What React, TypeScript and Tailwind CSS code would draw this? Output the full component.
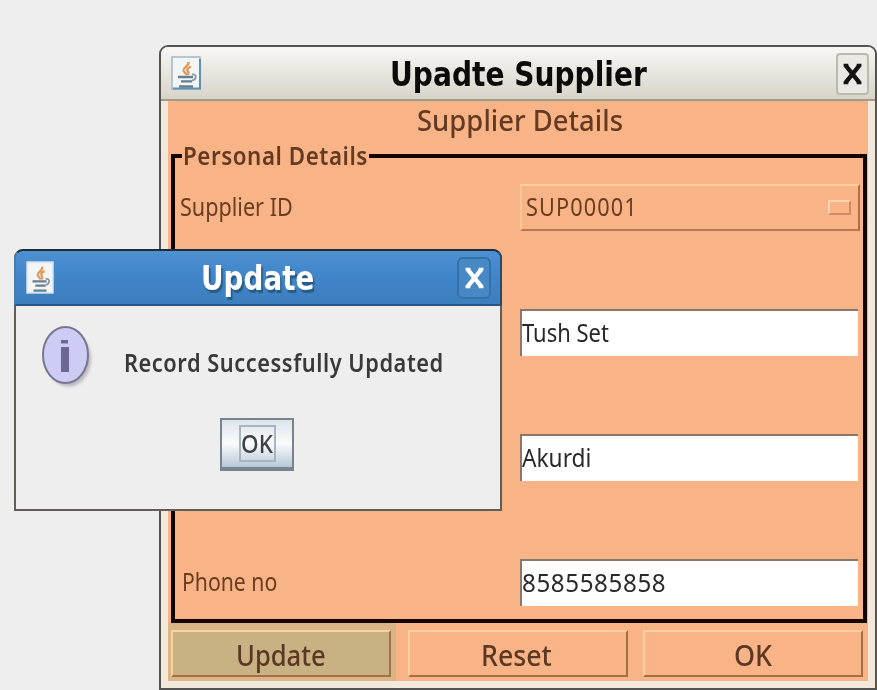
import { useLayoutEffect, useRef, useState } from 'react';

// One line of text, condensed or widened so that it fills its box.
function Fit({ text, className }: { text: string; className: string }) {
  const box = useRef<HTMLDivElement>(null);
  const inner = useRef<HTMLSpanElement>(null);
  const [scale, setScale] = useState(1);
  useLayoutEffect(() => {
    if (box.current && inner.current) {
      setScale(box.current.offsetWidth / inner.current.offsetWidth);
    }
  }, [text]);
  return (
    <div ref={box} className={`shrink-0 leading-none ${className}`}>
      <span
        ref={inner}
        className="inline-block origin-left whitespace-nowrap"
        style={{ transform: `scaleX(${scale})` }}
      >
        {text}
      </span>
    </div>
  );
}

function JavaIcon({ className, framed }: { className: string; framed: boolean }) {
  return (
    <svg viewBox="0 0 30 34" preserveAspectRatio="none" className={className}>
      <rect x="1" y="1" width="28" height="32" fill="#f3f5f5" stroke={framed ? '#a3b7c4' : '#cfdde8'} strokeWidth="1.5" />
      {framed && <path d="M2 32.500H29V3" fill="none" stroke="#5f8fb3" strokeWidth="2" />}
      <path d="M17.500 6c1 4-5.500 5-5 8.500.5 2 2.500 2.500 3 4.500M20 10.500c-4 1.500-4.500 3.500-3 5 1 1 0 2.500-.5 3.500" fill="none" stroke="#dd9a5c" strokeWidth="2.400" />
      <path d="M7 21h15M10 25.300h11M8 30.500h14" fill="none" stroke="#647f8f" strokeWidth="2.300" />
      <path d="M21 18.500c5-1 5 5 0 6" fill="none" stroke="#8498a6" strokeWidth="1.800" />
    </svg>
  );
}

function CloseMark({ className }: { className: string }) {
  return (
    <svg viewBox="0 0 20 24" preserveAspectRatio="none" className={className}>
      <path d="M3.500 3.500L16.500 20.500M16.500 3.500L3.500 20.500" fill="none" stroke="currentColor" strokeWidth="4.200" />
      <path d="M1.500 3.200h4.500M14 3.200h4.500M1.500 20.800h4.500M14 20.800h4.500" fill="none" stroke="currentColor" strokeWidth="3" />
    </svg>
  );
}

function Field({ value, className }: { value: string; className: string }) {
  return (
    <div className="flex h-[47px] w-[338px] items-start border-t-2 border-l-2 border-[#8b7767] bg-white pt-[9px]">
      <Fit text={value} className={`text-[25px] text-[#292929] ${className}`} />
    </div>
  );
}

function MotifButton({ text, box, label }: { text: string; box: string; label: string }) {
  return (
    <div className={`flex h-[47px] justify-center border-2 border-t-[#fbd29f] border-l-[#fbd29f] border-r-[#a56f45] border-b-[#a56f45] pt-[8px] ${box}`}>
      <Fit text={text} className={`text-[29px] font-medium text-[#5c3822] ${label}`} />
    </div>
  );
}

function SupplierWindow() {
  return (
    <div className="absolute top-[45px] left-[159px] flex h-[645px] w-[718px] flex-col rounded-t-[9px] border-2 border-[#55534f] bg-[#f2e8dc]">
      <div className="flex h-[54px] shrink-0 items-start justify-between rounded-t-[7px] border-b-2 border-[#a49c8b] bg-linear-to-b from-[#f7f7f5] via-[#e7e5df] to-[#d8d4ca] pt-[6px] pr-[6px] pl-[10px]">
        <JavaIcon framed className="mt-[3px] h-[34px] w-[30px]" />
        <Fit text="Upadte Supplier" className="mt-[4px] w-[257px] font-['DejaVu_Sans'] text-[34px] font-bold text-[#0c0b09]" />
        <div className="flex h-[42px] w-[33px] items-center justify-center rounded-sm border-2 border-[#bdb9af] bg-[#ebe9e4]">
          <CloseMark className="h-[24px] w-[21px] text-[#15130f]" />
        </div>
      </div>
      <div className="ml-[7px] flex h-[580px] w-[700px] shrink-0 flex-col bg-[#f8b486] px-[3px]">
        <div className="flex h-[42px] shrink-0 justify-center pt-[5px] pl-[3px]">
          <Fit text="Supplier Details" className="w-[206px] text-[28px] font-medium text-[#653a22]" />
        </div>
        <fieldset className="flex h-[480px] w-[696px] shrink-0 flex-col border-[4px] border-[#130400] pl-[5px]">
          <legend className="ml-[2px] h-[26px] bg-[#f8b486] px-px">
            <Fit text="Personal Details" className="w-[185px] text-[25px] font-semibold tracking-wide text-[#653a22]" />
          </legend>
          <div className="mt-[15px] flex h-[125px] items-start justify-between pr-[3px]">
            <Fit text="Supplier ID" className="mt-[9px] w-[113px] text-[26px] text-[#6b3d20]" />
            <div className="flex h-[47px] w-[340px] items-start justify-between border-2 border-t-[#ffd09b] border-l-[#fac891] border-r-[#ad7048] border-b-[#b37a50] pt-[8px] pr-[7px] pl-[4px]">
              <Fit text="SUP00001" className="w-[112px] text-[25px] tracking-wider text-[#6b3d20]" />
              <div className="mt-[6px] h-[15px] w-[23px] border-2 border-t-[#ffd5b0] border-l-[#ffd5b0] border-r-[#ce8b64] border-b-[#ce8b64]" />
            </div>
          </div>
          <div className="flex h-[125px] items-start justify-end pr-[5px]">
            <Field value="Tush Set" className="w-[87px]" />
          </div>
          <div className="flex h-[125px] items-start justify-end pr-[5px]">
            <Field value="Akurdi" className="w-[69px]" />
          </div>
          <div className="flex items-start justify-between pr-[5px]">
            <Fit text="Phone no" className="mt-[10px] ml-[2px] w-[95px] text-[25px] text-[#6b3d20]" />
            <Field value="8585585858" className="w-[144px] tracking-wide" />
          </div>
        </fieldset>
        <div className="-mx-[3px] flex h-[58px] pt-[7px]">
          <div className="-mt-[7px] h-[58px] w-[228px] bg-[#dab587] pt-[7px] pl-[3px]">
            <MotifButton text="Update" box="w-[220px] bg-[#c8b284]" label="w-[90px]" />
          </div>
          <div className="pl-[12px]">
            <MotifButton text="Reset" box="w-[220px] pr-[3px]" label="w-[71px]" />
          </div>
          <div className="pl-[15px]">
            <MotifButton text="OK" box="w-[220px]" label="w-[38px]" />
          </div>
        </div>
      </div>
    </div>
  );
}

function InfoIcon() {
  return (
    <svg viewBox="0 0 54 66" className="h-[66px] w-[54px]">
      <defs>
        <filter id="soft">
          <feGaussianBlur stdDeviation="1.500" />
        </filter>
      </defs>
      <ellipse cx="27.500" cy="34" rx="22.500" ry="27.500" fill="#b9b9bf" filter="url(#soft)" />
      <ellipse cx="24.500" cy="30" rx="22.500" ry="28" fill="#cdccf5" stroke="#77768f" strokeWidth="2" />
      <path d="M20 15h7v3.500h-7zM20 22h8v25h-8z" fill="#6b6991" />
    </svg>
  );
}

function UpdateDialog() {
  return (
    <div className="absolute top-[249px] left-[14px] flex h-[262px] w-[488px] flex-col rounded-t-[9px] border-2 border-[#615d58] bg-[#eeeeee]">
      <div className="-mx-[2px] -mt-[2px] flex h-[57px] shrink-0 items-start justify-between rounded-t-[9px] border-2 border-t-[#222c36] border-r-[#294b68] border-b-[#265783] border-l-[#477eac] bg-linear-to-b from-[#4d91d2] via-[#4085c9] to-[#3c7fbe] pt-[6px] pr-[9px] pl-[10px]">
        <JavaIcon framed={false} className="mt-[4px] h-[33px] w-[28px]" />
        <Fit text="Update" className="mt-[5px] ml-[3px] w-[113px] font-['DejaVu_Sans'] text-[33px] font-bold text-white text-shadow-[2px_3px_1px_#285b87]" />
        <div className="flex h-[42px] w-[34px] items-center justify-center rounded-md border-2 border-[#3471a9] bg-[#4889c5]">
          <CloseMark className="h-[24px] w-[21px] text-white" />
        </div>
      </div>
      <div className="flex items-start pt-[19px] pl-[25px]">
        <InfoIcon />
        <Fit text="Record Successfully Updated" className="mt-[25px] ml-[29px] w-[320px] text-[25px] font-semibold tracking-wide text-[#393939]" />
      </div>
      <div className="mt-[27px] ml-[204px] flex h-[53px] w-[74px] items-center justify-center border-2 border-b-4 border-[#79838e] bg-linear-to-b from-[#dce4ea] via-[#fafbfc] to-[#b8c8d5]">
        <div className="flex h-[37px] w-[37px] justify-center border-2 border-[#a7b5c2] pt-[3px]">
          <Fit text="OK" className="w-[32px] text-[26px] font-medium text-[#3d4247]" />
        </div>
      </div>
    </div>
  );
}

export default function App() {
  return (
    <main className="relative h-[690px] w-[877px] overflow-hidden bg-[#eeeeee] font-['Noto_Sans','Open_Sans',sans-serif]">
      <SupplierWindow />
      <UpdateDialog />
    </main>
  );
}
